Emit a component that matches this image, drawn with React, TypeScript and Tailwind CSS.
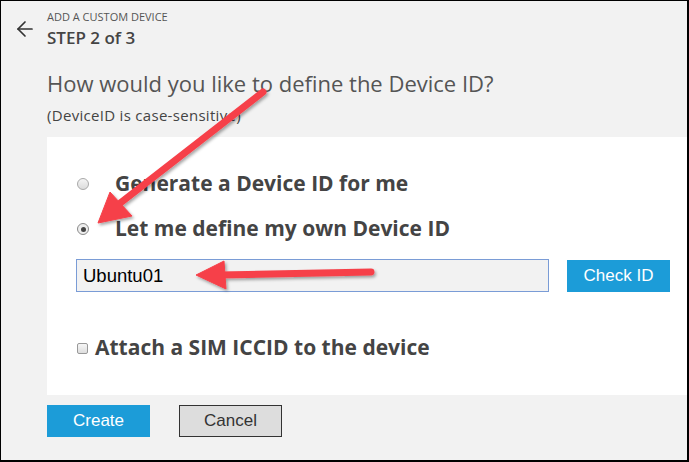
import { ArrowLeft } from 'lucide-react'

function Arrows() {
    return (
        <svg className="absolute inset-0 pointer-events-none" width="689" height="462" viewBox="0 0 689 462">
            <defs>
                <filter id="sh" x="-20%" y="-20%" width="140%" height="140%">
                    <feDropShadow dx="1.5" dy="2" stdDeviation="1.8" floodColor="#000" floodOpacity="0.35" />
                </filter>
            </defs>
            <g fill="#f6414a" stroke="#f6414a" filter="url(#sh)">
                <line x1="262" y1="91" x2="118" y2="203" strokeWidth="7" strokeLinecap="round" />
                <polygon points="97,222 109,191 131,215" strokeWidth="1" strokeLinejoin="round" />
                <line x1="370" y1="271" x2="218" y2="274" strokeWidth="7" strokeLinecap="round" />
                <polygon points="195,274 223,260 225,288" strokeWidth="1" strokeLinejoin="round" />
            </g>
        </svg>
    )
}

export default function App() {
    return (
        <div className="relative w-[689px] h-[462px] bg-[#f2f2f2] border-t border-l border-b-2 border-r-2 border-black overflow-hidden text-[#444]" style={{ fontFamily: '"Open Sans", "Noto Sans", sans-serif' }}>
            <div className="flex">
                <div className="w-[46px] pt-[16px] pl-[12px]">
                    <ArrowLeft size={24} strokeWidth={1.7} className="text-[#333]" />
                </div>
                <div className="pt-[9px]">
                    <div className="text-[11px] leading-[14px] text-[#555] uppercase">Add a custom device</div>
                    <div className="text-[17px] leading-[22px] font-semibold text-[#444] mt-[3px]">STEP 2 of 3</div>
                </div>
            </div>

            <div className="pl-[46px]">
                <h1 className="mt-[20px] text-[22px] leading-[28px] text-[#555]">How would you like to define the Device ID?</h1>
                <p className="mt-[8px] text-[15px] leading-[20px] tracking-[0.3px] text-[#444]">(DeviceID is case-sensitive)</p>

                <div className="mt-[12px] bg-white h-[258px] pt-[33px] pl-[29px] pr-[16px]">
                    <label className="flex items-center h-[28px]">
                        <span className="w-[12px] h-[12px] rounded-full border border-[#a9a9a9] bg-gradient-to-b from-[#f4f4f4] to-[#dcdcdc] ml-[1px]" />
                        <span className="ml-[26px] text-[21px] font-bold text-[#444]">Generate a Device ID for me</span>
                    </label>
                    <label className="flex items-center h-[28px] mt-[17px]">
                        <span className="w-[12px] h-[12px] rounded-full border border-[#8a8a8a] bg-[#eee] ml-[1px] flex items-center justify-center">
                            <span className="w-[5px] h-[5px] rounded-full bg-[#444]" />
                        </span>
                        <span className="ml-[26px] text-[21px] font-bold text-[#444]">Let me define my own Device ID</span>
                    </label>

                    <div className="flex items-center mt-[16px]">
                        <div className="w-[473px] h-[33px] border border-[#7a9cd6] bg-[#f2f2f2] flex items-center pl-[6px] text-[18.5px] text-black" style={{ fontFamily: '"Liberation Sans", Arial, sans-serif' }}>
                            Ubuntu01
                        </div>
                        <button className="ml-[18px] w-[103px] h-[32px] bg-[#1c9cd8] text-white text-[17px]" style={{ fontFamily: '"Liberation Sans", Arial, sans-serif' }}>
                            Check ID
                        </button>
                    </div>

                    <label className="flex items-center mt-[42px] h-[28px]">
                        <span className="w-[11px] h-[11px] rounded-[2px] border border-[#999] bg-gradient-to-b from-[#f6f6f6] to-[#dedede] ml-[1px]" />
                        <span className="ml-[7px] text-[21px] font-bold text-[#444]">Attach a SIM ICCID to the device</span>
                    </label>
                </div>

                <div className="flex mt-[10px] gap-[29px]" style={{ fontFamily: '"Liberation Sans", Arial, sans-serif' }}>
                    <button className="w-[103px] h-[32px] bg-[#1c9cd8] text-white text-[17px]">Create</button>
                    <button className="w-[103px] h-[32px] bg-[#dddddd] border border-[#333] text-[#333] text-[17px]">Cancel</button>
                </div>
            </div>

            <Arrows />
        </div>
    )
}
